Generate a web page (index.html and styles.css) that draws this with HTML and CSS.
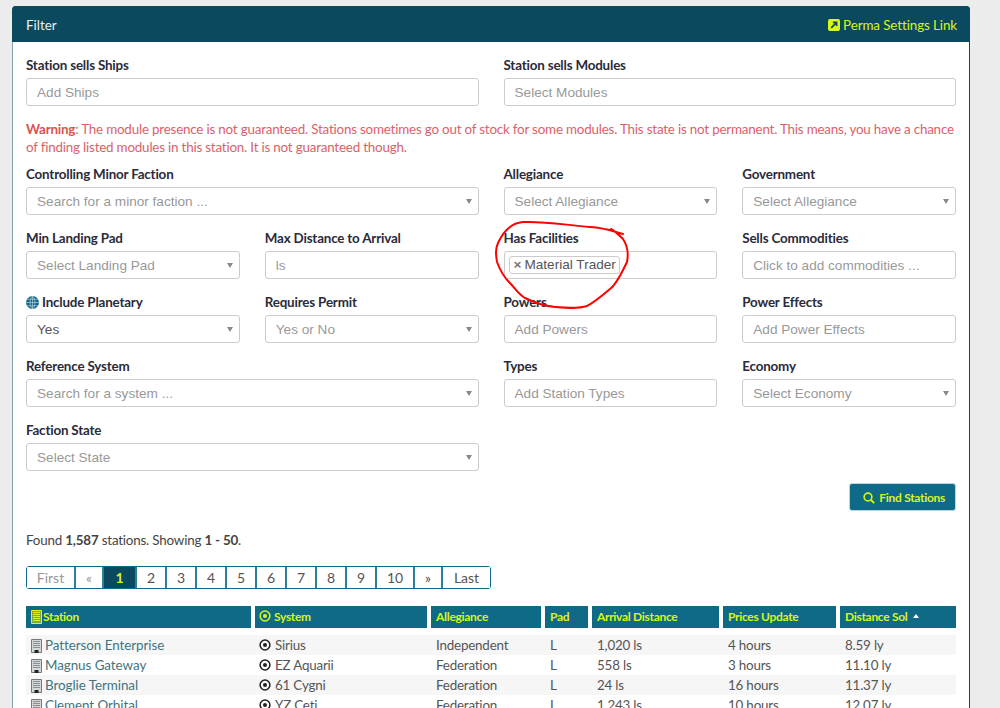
FILE: index.html
```html
<!DOCTYPE html>
<html lang="en">
<head>
<meta charset="utf-8">
<title>Filter</title>
<link rel="stylesheet" href="styles.css">
</head>
<body>
<svg width="0" height="0" class="defs">
  <symbol id="building" viewBox="0 0 11 14"><path d="M.5.5h10v13h-10z" fill="#d4d8da" stroke="#777"/><path d="M2 2h7v1H2zM2 4h7v1H2zM2 6h7v1H2zM2 8h7v1H2z" fill="#8b8f92"/><path d="M3.5 11h4v3h-4z" fill="#222"/></symbol>
  <symbol id="building-h" viewBox="0 0 11 14"><path d="M.5.5h10v13h-10z" fill="#7fa84a" stroke="currentColor"/><path d="M2 2h7v1H2zM2 4h7v1H2zM2 6h7v1H2zM2 8h7v1H2zM2 10h7v1H2z" fill="currentColor"/></symbol>
  <symbol id="target" viewBox="0 0 12 12"><circle cx="6" cy="6" r="4.9" fill="none" stroke="currentColor" stroke-width="1.5"/><circle cx="6" cy="6" r="2" fill="currentColor"/></symbol>
</svg>
<main class="panel">
  <header class="panel-head">
    <span>Filter</span>
    <a class="perma" href="#"><svg class="ico-link" viewBox="0 0 12 12"><rect width="12" height="12" rx="2" fill="#d9f51c"/><path d="M3.2 8.8 7.6 4.4M4.9 3.4h3.7v3.7" stroke="#0b4a5e" stroke-width="1.7" fill="none"/></svg>Perma Settings Link</a>
  </header>
  <div class="panel-body">
    <section class="two">
      <div class="field"><label>Station sells Ships</label><div class="input ph">Add Ships</div></div>
      <div class="field"><label>Station sells Modules</label><div class="input ph">Select Modules</div></div>
    </section>
    <p class="warning"><b>Warning</b>: The module presence is not guaranteed. Stations sometimes go out of stock for some modules. This state is not permanent. This means, you have a chance of finding listed modules in this station. It is not guaranteed though.</p>
    <section class="four">
      <div class="field span2"><label>Controlling Minor Faction</label><div class="input ph sel">Search for a minor faction ...</div></div>
      <div class="field"><label>Allegiance</label><div class="input ph sel">Select Allegiance</div></div>
      <div class="field"><label>Government</label><div class="input ph sel">Select Allegiance</div></div>

      <div class="field"><label>Min Landing Pad</label><div class="input ph sel">Select Landing Pad</div></div>
      <div class="field"><label>Max Distance to Arrival</label><div class="input ph">ls</div></div>
      <div class="field"><label>Has Facilities</label><div class="input tagbox"><span class="tag"><i>×</i>Material Trader</span></div></div>
      <div class="field"><label>Sells Commodities</label><div class="input ph">Click to add commodities ...</div></div>

      <div class="field"><label><svg class="ico-globe" viewBox="0 0 12 12"><circle cx="6" cy="6" r="6" fill="#0f6a87"/><path d="M0 6h12M1 3h10M1 9h10M6 0v12M6 0C3 3 3 9 6 12M6 0c3 3 3 9 0 12" stroke="#bcd6df" stroke-width=".6" fill="none"/></svg>Include Planetary</label><div class="input sel val">Yes</div></div>
      <div class="field"><label>Requires Permit</label><div class="input ph sel">Yes or No</div></div>
      <div class="field"><label>Powers</label><div class="input ph">Add Powers</div></div>
      <div class="field"><label>Power Effects</label><div class="input ph">Add Power Effects</div></div>

      <div class="field span2"><label>Reference System</label><div class="input ph sel">Search for a system ...</div></div>
      <div class="field"><label>Types</label><div class="input ph">Add Station Types</div></div>
      <div class="field"><label>Economy</label><div class="input ph sel">Select Economy</div></div>

      <div class="field span2"><label>Faction State</label><div class="input ph sel">Select State</div></div>
    </section>
    <div class="actions">
      <button class="find" type="button"><svg class="ico-search" viewBox="0 0 12 12"><circle cx="5" cy="5" r="3.9" fill="none" stroke="currentColor" stroke-width="1.6"/><path d="m8 8 3.2 3.2" stroke="currentColor" stroke-width="1.8"/></svg>Find Stations</button>
    </div>
    <p class="found">Found <b>1,587</b> stations. Showing <b>1 - 50</b>.</p>
    <nav class="pager">
      <a class="muted p-first">First</a><a class="muted p-arrow">«</a><a class="on">1</a><a>2</a><a>3</a><a>4</a><a>5</a><a>6</a><a>7</a><a>8</a><a>9</a><a class="p-ten">10</a><a class="p-arrow">»</a><a class="p-last">Last</a>
    </nav>
    <table class="results">
      <colgroup><col class="c1"><col class="c2"><col class="c3"><col class="c4"><col class="c5"><col class="c6"><col class="c7"></colgroup>
      <thead><tr>
        <th><svg class="i-b"><use href="#building-h"/></svg>Station</th>
        <th><svg class="i-t"><use href="#target"/></svg>System</th>
        <th>Allegiance</th><th>Pad</th><th>Arrival Distance</th><th>Prices Update</th><th>Distance Sol<span class="caret"></span></th>
      </tr></thead>
      <tbody>
        <tr><td><a><svg class="i-b"><use href="#building"/></svg>Patterson Enterprise</a></td><td><svg class="i-t"><use href="#target"/></svg>Sirius</td><td>Independent</td><td>L</td><td>1,020 ls</td><td>4 hours</td><td>8.59 ly</td></tr>
        <tr><td><a><svg class="i-b"><use href="#building"/></svg>Magnus Gateway</a></td><td><svg class="i-t"><use href="#target"/></svg>EZ Aquarii</td><td>Federation</td><td>L</td><td>558 ls</td><td>3 hours</td><td>11.10 ly</td></tr>
        <tr><td><a><svg class="i-b"><use href="#building"/></svg>Broglie Terminal</a></td><td><svg class="i-t"><use href="#target"/></svg>61 Cygni</td><td>Federation</td><td>L</td><td>24 ls</td><td>16 hours</td><td>11.37 ly</td></tr>
        <tr><td><a><svg class="i-b"><use href="#building"/></svg>Clement Orbital</a></td><td><svg class="i-t"><use href="#target"/></svg>YZ Ceti</td><td>Federation</td><td>L</td><td>1,243 ls</td><td>10 hours</td><td>12.07 ly</td></tr>
      </tbody>
    </table>
  </div>
</main>
<svg class="scribble" viewBox="0 0 1000 708" width="1000" height="708"><path d="M623 234C612 231 606 228 590 227C565 225 545 221 523 222C510 223 503 232 498 243C495 250 496 255 497 262C500 270 503 276 509 282C515 288 518 294 525 298C535 303 545 306 555 307C567 308 578 309 587 306C595 302 603 295 610 289C617 284 623 270 627 262C629 252 627 245 623 239C619 235 615 231 611 229" fill="none" stroke="#f00" stroke-width="2" stroke-linecap="round"/></svg>
</body>
</html>
```
FILE: styles.css
```css
* { box-sizing: border-box; }
html, body { height: 708px; overflow: hidden; }
body {
  margin: 0;
  padding: 6px 30px 0 12px;
  background: #ececec;
  color: #444;
  font: 13.4px/20px Lato, "Open Sans", sans-serif;
}
.defs { position: absolute; }
.panel {
  background: #fff;
  border: 1px solid #0b4a5e;
  border-left-color: #7fa3b1;
  border-radius: 4px 4px 0 0;
  height: 760px;
}
.panel-head {
  display: flex;
  justify-content: space-between;
  align-items: center;
  height: 36px;
  margin: -1px -1px 0;
  padding: 2px 13px 0 14px;
  background: #0b4a5e;
  border-radius: 4px 4px 0 0;
  color: #e8f0f2;
}
.perma { display: flex; align-items: center; color: #d9f51c; text-decoration: none; letter-spacing: -.1px; }
.ico-link { width: 12px; height: 12px; margin-right: 3px; }
.panel-body { padding: 13px 13px 0; }
.two { display: grid; grid-template-columns: 1fr 1fr; column-gap: 25px; }
.four { display: grid; grid-template-columns: repeat(4, 1fr); column-gap: 25px; row-gap: 13px; }
.span2 { grid-column: span 2; }
.field label {
  display: flex;
  align-items: center;
  height: 20px;
  margin-bottom: 3px;
  font-weight: 700;
  letter-spacing: -.18px;
  color: #2b2b3a;
}
.ico-globe { width: 13px; height: 13px; margin-right: 3px; }
.input {
  position: relative;
  height: 28px;
  padding: 0 10px;
  border: 1px solid #ccc;
  border-radius: 3px;
  background: #fff;
  font: 13.6px/27px "Liberation Sans", Arial, sans-serif;
}
.ph { color: #999; }
.val { color: #555; }
.sel::after {
  content: "";
  position: absolute;
  right: 6px;
  top: 11px;
  border: 3px solid transparent;
  border-top: 5px solid #888;
  border-bottom: 0;
}
.tagbox { display: flex; align-items: flex-start; padding: 4px; }
.tag {
  display: block;
  height: 18px;
  padding: 0 3px 0 4px;
  border: 1px solid #ccc;
  border-radius: 3px;
  color: #555;
  line-height: 16px;
  white-space: nowrap;
}
.tag i { font-style: normal; font-weight: 700; color: #777; margin-right: 3px; }
.warning {
  margin: 14px 0 8px;
  line-height: 18px;
  letter-spacing: -.2px;
  color: #d9626a;
}
.warning b { color: #d9534f; }
.actions { display: flex; justify-content: flex-end; margin-top: 12px; }
.find {
  display: flex;
  align-items: center;
  height: 28px;
  padding: 1px 10px 0 13px;
  border: 1px solid #bcd6df;
  border-radius: 3px;
  background: #0f6a87;
  color: #d9f51c;
  font: 700 12px/20px Lato, sans-serif;
  letter-spacing: -.3px;
}
.ico-search { width: 12px; height: 12px; margin-right: 4px; }
.found { margin: 19px 0 16px; letter-spacing: -.2px; }
.pager {
  display: inline-flex;
  height: 23px;
  gap: 2px;
  border: 1px solid #0f6a87;
  border-radius: 3px;
  background: #2f7d98;
  vertical-align: top;
  font-size: 14px;
}
.pager a {
  width: 28px;
  background: #fff;
  text-align: center;
  line-height: 21px;
  color: #555;
}
.pager .on { width: 31px; background: #0b4a5e; color: #d9f51c; font-weight: 700; }
.pager .muted { color: #999; }
.pager .p-first { width: 47px; }
.pager .p-arrow { width: 26px; }
.pager .p-ten { width: 36px; }
.pager .p-last { width: 47px; }
.results {
  width: 100%;
  margin-top: 17px;
  border-collapse: separate;
  border-spacing: 0;
  table-layout: fixed;
}
.c1 { width: 229px; }
.c2 { width: 176px; }
.c3 { width: 114px; }
.c4 { width: 47px; }
.c5 { width: 131px; }
.c6 { width: 117px; }
.results th {
  height: 29px;
  padding: 0 5px;
  border-right: 4px solid #fff;
  border-bottom: 7px solid #fff;
  background: #0f6a87;
  background-clip: padding-box;
  color: #d9f51c;
  font-size: 12px;
  font-weight: 700;
  letter-spacing: -.3px;
  text-align: left;
  white-space: nowrap;
  line-height: 20px;
}
.results th:last-child { border-right: 0; }
.results td {
  height: 20px;
  padding: 0 5px;
  color: #555;
  letter-spacing: -.2px;
  white-space: nowrap;
  line-height: 20px;
}
.results tbody tr:nth-child(odd) { background: #f6f6f6; }
.results td a { color: #3f7480; letter-spacing: -.05px; }
.i-b { width: 11px; height: 14px; margin: 0 3px 0 0; vertical-align: -3px; }
.i-t { width: 12px; height: 12px; margin: 0 4px 0 -1px; vertical-align: -1px; }
th .i-b { margin-right: 1px; }
th .i-t { margin-right: 3px; }
td .i-t { color: #222; }
.caret {
  display: inline-block;
  margin-left: 5px;
  vertical-align: 3px;
  border: 3.5px solid transparent;
  border-bottom: 4px solid #fff;
  border-top: 0;
}
.scribble { position: absolute; left: 0; top: 0; pointer-events: none; }
```
